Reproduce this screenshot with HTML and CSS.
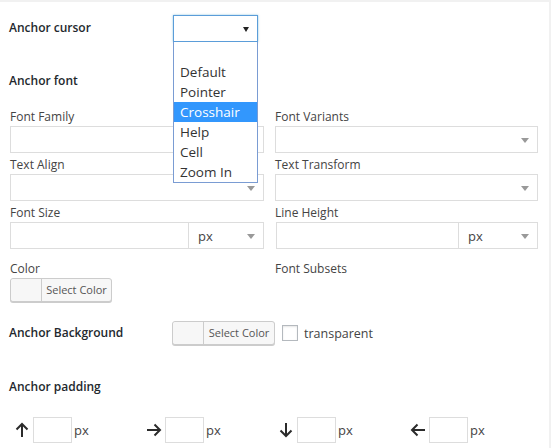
FILE: index.html
```html
<!DOCTYPE html>
<html>
<head>
<meta charset="utf-8">
<link rel="stylesheet" href="styles.css">
</head>
<body>
<div class="panel">
  <div class="row-cursor">
    <div class="bold-label">Anchor cursor</div>
    <div class="cursor-wrap">
      <div class="cursor-select"><span class="caret-dark"></span></div>
      <ul class="listbox">
        <li class="opt">&nbsp;</li>
        <li class="opt">Default</li>
        <li class="opt">Pointer</li>
        <li class="opt active">Crosshair</li>
        <li class="opt">Help</li>
        <li class="opt">Cell</li>
        <li class="opt">Zoom In</li>
      </ul>
    </div>
  </div>

  <div class="bold-label heading-font">Anchor font</div>

  <div class="font-grid">
    <div class="field">
      <div class="label">Font Family</div>
      <div class="box"></div>
    </div>
    <div class="field">
      <div class="label">Font Variants</div>
      <div class="box select"><span class="caret"></span></div>
    </div>
    <div class="field">
      <div class="label">Text Align</div>
      <div class="box select"><span class="caret"></span></div>
    </div>
    <div class="field">
      <div class="label">Text Transform</div>
      <div class="box select"><span class="caret"></span></div>
    </div>
    <div class="field">
      <div class="label">Font Size</div>
      <div class="combo">
        <div class="box num"></div>
        <div class="box unit select"><span class="unit-text">px</span><span class="caret"></span></div>
      </div>
    </div>
    <div class="field">
      <div class="label">Line Height</div>
      <div class="combo">
        <div class="box num"></div>
        <div class="box unit select"><span class="unit-text">px</span><span class="caret"></span></div>
      </div>
    </div>
    <div class="field color-field">
      <div class="label">Color</div>
      <div class="color-btn"><span class="swatch"></span><span class="btn-text">Select Color</span></div>
    </div>
    <div class="field color-field">
      <div class="label">Font Subsets</div>
    </div>
  </div>

  <div class="row-bg">
    <div class="bold-label bg-label">Anchor Background</div>
    <div class="color-btn"><span class="swatch"></span><span class="btn-text">Select Color</span></div>
    <span class="checkbox"></span>
    <span class="check-text">transparent</span>
  </div>

  <div class="bold-label heading-padding">Anchor padding</div>

  <div class="pad-row">
    <div class="pad-group">
      <span class="arrow">
        <svg width="14" height="16" viewBox="0 0 14 16"><path d="M7 15V2M1.5 7.5L7 2l5.5 5.5" fill="none" stroke="#2b2b2b" stroke-width="2"/></svg>
      </span>
      <span class="pad-input"></span><span class="px">px</span>
    </div>
    <div class="pad-group">
      <span class="arrow">
        <svg width="16" height="14" viewBox="0 0 16 14"><path d="M1 7h13M8.5 1.5L14 7l-5.5 5.5" fill="none" stroke="#2b2b2b" stroke-width="2"/></svg>
      </span>
      <span class="pad-input"></span><span class="px">px</span>
    </div>
    <div class="pad-group">
      <span class="arrow">
        <svg width="14" height="16" viewBox="0 0 14 16"><path d="M7 1v13M1.5 8.5L7 14l5.5-5.5" fill="none" stroke="#2b2b2b" stroke-width="2"/></svg>
      </span>
      <span class="pad-input"></span><span class="px">px</span>
    </div>
    <div class="pad-group">
      <span class="arrow">
        <svg width="16" height="14" viewBox="0 0 16 14"><path d="M15 7H2M7.5 1.5L2 7l5.5 5.5" fill="none" stroke="#2b2b2b" stroke-width="2"/></svg>
      </span>
      <span class="pad-input"></span><span class="px">px</span>
    </div>
  </div>
</div>
</body>
</html>
```

FILE: styles.css
```css
html, body {
  margin: 0;
  padding: 0;
}
body {
  background: #f1f1f1;
  font-family: "Open Sans", "Noto Sans", sans-serif;
  font-size: 12px;
  color: #32373c;
}
.panel {
  background: #fff;
  margin-top: 2px;
  width: 549px;
  height: 446px;
  box-sizing: border-box;
  padding: 13px 0 0 9px;
}
.bold-label {
  font-weight: 600;
  font-size: 12px;
  color: #23282d;
  line-height: 18px;
}
.row-cursor {
  display: flex;
  align-items: center;
  height: 27px;
}
.row-cursor .bold-label {
  width: 164px;
  margin-top: -1px;
}
.cursor-wrap {
  position: relative;
  width: 85px;
  height: 27px;
}
.cursor-select {
  box-sizing: border-box;
  width: 85px;
  height: 27px;
  border: 1px solid #5b9dd9;
  box-shadow: 0 0 2px rgba(30, 140, 190, 0.5);
  background: #fff;
  position: relative;
}
.caret-dark {
  position: absolute;
  right: 8px;
  top: 11px;
  width: 0;
  height: 0;
  border-left: 3px solid transparent;
  border-right: 3px solid transparent;
  border-top: 5px solid #222;
}
.listbox {
  position: absolute;
  left: 0;
  top: 27px;
  width: 85px;
  box-sizing: border-box;
  margin: 0;
  padding: 0;
  list-style: none;
  background: #fff;
  border: 1px solid #7a9cd3;
  border-top: none;
  z-index: 5;
}
.opt {
  height: 20px;
  line-height: 20px;
  padding-left: 6px;
  font-size: 13.5px;
  color: #333;
}
.opt.active {
  background: #3297fd;
  color: #fff;
}
.heading-font {
  margin-top: 30px;
}
.font-grid {
  display: grid;
  grid-template-columns: 254px 263px;
  column-gap: 11px;
  margin-top: 15px;
  margin-left: 1px;
}
.label {
  height: 21px;
  line-height: 18px;
  padding-top: 3px;
  box-sizing: border-box;
  color: #444;
  font-size: 12px;
}
.box {
  box-sizing: border-box;
  height: 27px;
  border: 1px solid #ddd;
  background: #fff;
  position: relative;
}
.caret {
  position: absolute;
  right: 8px;
  top: 11px;
  width: 0;
  height: 0;
  border-left: 4px solid transparent;
  border-right: 4px solid transparent;
  border-top: 5px solid #999;
}
.combo {
  display: flex;
}
.combo .num {
  flex: 1;
  border-right: none;
}
.combo .unit {
  width: 76px;
  flex: none;
}
.font-grid .field:nth-child(6) .combo .num {
  margin-left: 1px;
}
.font-grid .field:nth-child(6) .combo .unit {
  width: 80px;
}
.unit-text {
  position: absolute;
  left: 9px;
  top: 4px;
  font-size: 13px;
  color: #444;
}
.color-field {
  margin-top: 8px;
}
.color-btn {
  display: inline-flex;
  box-sizing: border-box;
  height: 24px;
  border: 1px solid #ccc;
  border-radius: 3px;
  background: #f7f7f7;
  box-shadow: 0 1px 0 #ccc;
  vertical-align: top;
}
.font-grid .color-btn {
  width: 102px;
}
.swatch {
  width: 30px;
  border-right: 1px solid #ccc;
  border-radius: 3px 0 0 3px;
  background: #f7f7f7;
}
.btn-text {
  flex: 1;
  text-align: center;
  font-size: 11px;
  line-height: 22px;
  color: #555;
}
.row-bg {
  display: flex;
  align-items: center;
  margin-top: 19px;
  height: 24px;
}
.bg-label {
  width: 163px;
}
.row-bg .color-btn {
  width: 103px;
}
.checkbox {
  box-sizing: border-box;
  width: 16px;
  height: 16px;
  border: 1px solid #b4b9be;
  background: #fff;
  box-shadow: inset 0 1px 2px rgba(0,0,0,0.1);
  margin-left: 7px;
}
.check-text {
  margin-left: 6px;
  font-size: 12.5px;
  color: #444;
}
.heading-padding {
  margin-top: 33px;
}
.pad-row {
  display: flex;
  margin-top: 21px;
  margin-left: 2px;
}
.pad-group {
  width: 132px;
  display: flex;
  align-items: center;
  height: 26px;
}
.arrow {
  width: 22px;
  display: flex;
  justify-content: center;
  align-items: center;
}
.pad-input {
  box-sizing: border-box;
  width: 39px;
  height: 26px;
  border: 1px solid #ddd;
  background: #fff;
}
.px {
  margin-left: 2px;
  font-size: 13px;
  color: #444;
}
```
